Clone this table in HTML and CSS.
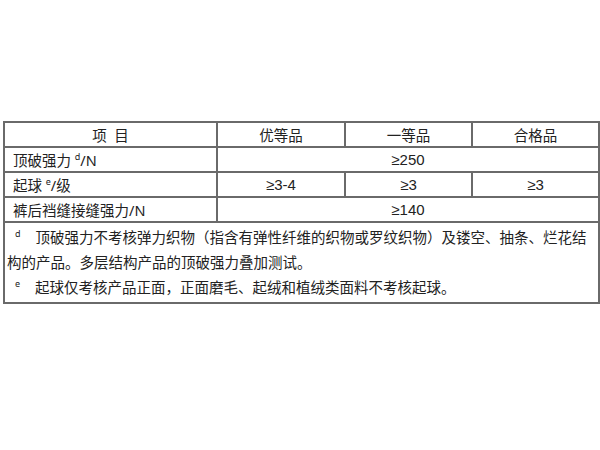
FILE: index.html
```html
<!DOCTYPE html>
<html lang="zh">
<head>
<meta charset="utf-8">
<link rel="stylesheet" href="styles.css">
</head>
<body>
<div class="page">
  <table class="spec">
    <colgroup>
      <col class="c1"><col class="c2"><col class="c3"><col class="c4">
    </colgroup>
    <tr class="row">
      <td class="center">项&nbsp;&nbsp;目</td>
      <td class="center">优等品</td>
      <td class="center">一等品</td>
      <td class="center">合格品</td>
    </tr>
    <tr class="row">
      <td class="label">顶破强力 <sup>d</sup>/N</td>
      <td class="center num" colspan="3">≥250</td>
    </tr>
    <tr class="row">
      <td class="label">起球 <sup>e</sup>/级</td>
      <td class="center num">≥3-4</td>
      <td class="center num">≥3</td>
      <td class="center num">≥3</td>
    </tr>
    <tr class="row">
      <td class="label">裤后裆缝接缝强力/N</td>
      <td class="center num" colspan="3">≥140</td>
    </tr>
    <tr>
      <td class="notes" colspan="4">
        <p class="note"><span class="mark">d</span>顶破强力不考核弹力织物（指含有弹性纤维的织物或罗纹织物）及镂空、抽条、烂花结构的产品。多层结构产品的顶破强力叠加测试。</p>
        <p class="note"><span class="mark">e</span>起球仅考核产品正面，正面磨毛、起绒和植绒类面料不考核起球。</p>
      </td>
    </tr>
  </table>
</div>
</body>
</html>
```
FILE: styles.css
```css
html, body {
  margin: 0;
  padding: 0;
  background: #ffffff;
}
.page {
  padding: 121px 0 0 3px;
  font-family: "Noto Sans", "Noto Sans CJK SC", sans-serif;
  color: #222222;
  font-size: 14.5px;
}
.spec {
  border-collapse: collapse;
  width: 595px;
  table-layout: fixed;
}
.c1 { width: 213px; }
.c2 { width: 128px; }
.c3 { width: 127px; }
.c4 { width: 127px; }
.spec td {
  border: 2px solid #6a6a6a;
  padding: 0;
  line-height: 20px;
}
.row td {
  height: 23px;
}
.center {
  text-align: center;
}
.num {
  font-family: "Liberation Sans", "DejaVu Sans", sans-serif;
  font-size: 15px;
}
.label {
  padding-left: 8px !important;
}
sup {
  font-size: 9px;
  line-height: 0;
  vertical-align: 6px;
}
.notes {
  padding: 2px 2px 2px 2px !important;
}
.note {
  margin: 0;
  line-height: 25px;
}
.mark {
  font-size: 9px;
  line-height: 0;
  vertical-align: 6px;
  margin-left: 8px;
  margin-right: 15px;
}
```
